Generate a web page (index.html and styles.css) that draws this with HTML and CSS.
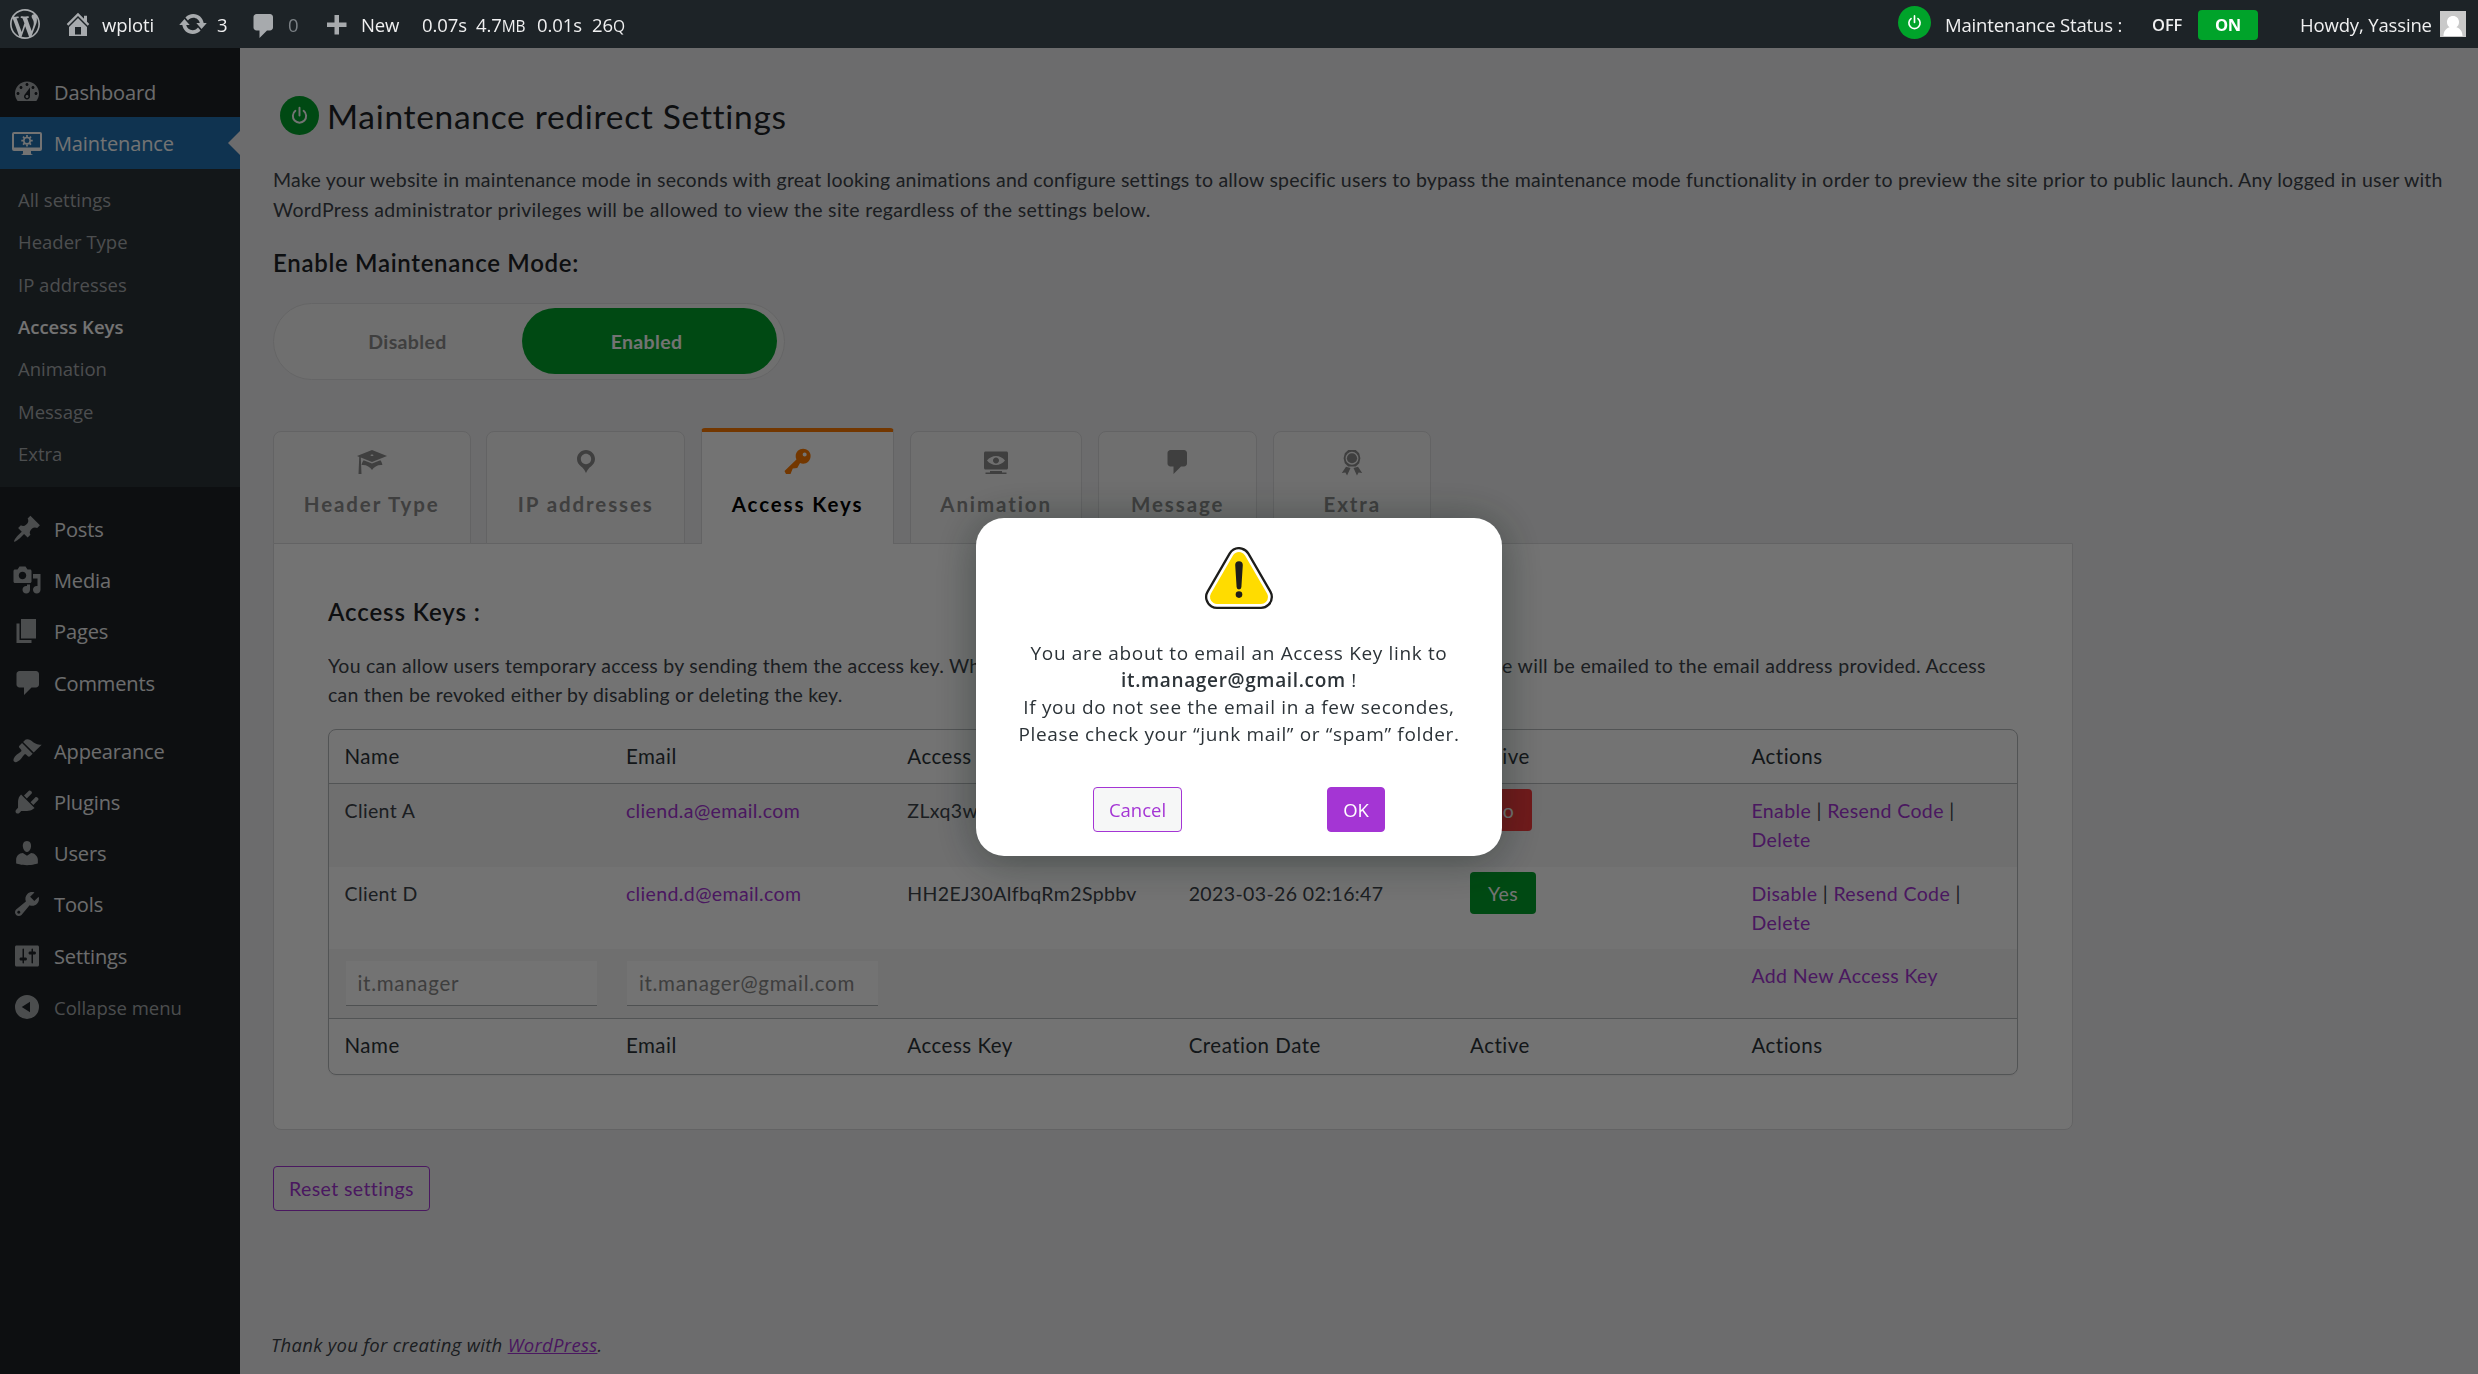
FILE: index.html
```html
<!DOCTYPE html>
<html lang="en">
<head>
<meta charset="utf-8">
<title>Maintenance redirect Settings</title>
<link rel="stylesheet" href="styles.css">
</head>
<body>
<header class="bar">
  <svg class="ic wp" viewBox="0 0 20 20"><path d="M20 10c0-5.51-4.49-10-10-10C4.48 0 0 4.49 0 10c0 5.52 4.48 10 10 10 5.51 0 10-4.48 10-10zM7.78 15.37L4.37 6.22c.55-.02 1.17-.08 1.17-.08.5-.06.44-1.13-.06-1.11 0 0-1.45.11-2.37.11-.18 0-.37 0-.58-.01C4.12 2.69 6.87 1.11 10 1.11c2.33 0 4.45.87 6.05 2.34-.68-.11-1.65.39-1.65 1.58 0 .74.45 1.36.9 2.1.35.61.55 1.36.55 2.46 0 1.49-1.4 5-1.4 5l-3.03-8.37c.54-.02.82-.17.82-.17.5-.05.44-1.25-.06-1.22 0 0-1.44.12-2.38.12-.87 0-2.33-.12-2.33-.12-.5-.03-.56 1.2-.06 1.22l.92.08 1.26 3.41zM17.41 10c.24-.64.74-1.87.43-4.25.7 1.29 1.05 2.71 1.05 4.25 0 3.29-1.73 6.24-4.4 7.78.97-2.59 1.94-5.2 2.92-7.78zM6.1 18.09C3.12 16.65 1.11 13.53 1.11 10c0-1.3.23-2.48.72-3.59C3.25 10.3 4.67 14.2 6.1 18.09zm4.03-6.63l2.58 6.98c-.86.29-1.76.45-2.71.45-.79 0-1.57-.11-2.29-.33.81-2.38 1.62-4.74 2.42-7.1z"/></svg>
  <svg class="ic home" viewBox="0 0 20 20"><path d="M16 8.5l1.53 1.53-1.06 1.06L10 4.6l-6.47 6.49-1.06-1.06L10 2.5l4 4v-2h2v4zm-6-2.46l6 5.99V18H4v-5.97zM12 17v-5H8v5h4z"/></svg>
  <span class="t site">wploti</span>
  <svg class="ic upd" viewBox="0 0 20 20"><path d="M10.2 3.28c3.53 0 6.43 2.61 6.92 6h2.08l-3.5 4-3.5-4h2.32c-.45-1.97-2.21-3.45-4.32-3.45-1.45 0-2.73.71-3.54 1.78L4.95 5.66C6.23 4.2 8.11 3.28 10.2 3.28zm-.4 13.44c-3.52 0-6.43-2.61-6.92-6H.8l3.5-4c1.17 1.33 2.33 2.67 3.5 4H5.48c.45 1.97 2.21 3.45 4.32 3.45 1.45 0 2.73-.71 3.54-1.78l1.71 1.95c-1.28 1.46-3.15 2.38-5.25 2.38z"/></svg>
  <span class="t three">3</span>
  <svg class="ic com" viewBox="0 0 20 20"><path d="M5 2h9c1.1 0 2 .9 2 2v7c0 1.1-.9 2-2 2h-2l-5 5v-5H5c-1.1 0-2-.9-2-2V4c0-1.1.9-2 2-2z"/></svg>
  <span class="t zero">0</span>
  <svg class="ic plus" viewBox="0 0 20 20"><path d="M17 7v3h-5v5H9v-5H4V7h5V2h3v5h5z"/></svg>
  <span class="t new">New</span>
  <span class="t q1">0.07s</span>
  <span class="t q2">4.7<small>MB</small></span>
  <span class="t q3">0.01s</span>
  <span class="t q4">26<small>Q</small></span>
  <div class="right">
    <svg class="pow" viewBox="0 0 40 40"><circle cx="20" cy="20" r="20"/><path d="M15.8 15.2a6.8 6.8 0 1 0 8.4 0M20 12v8"/></svg>
    <span class="t status">Maintenance Status :</span>
    <span class="t off">OFF</span>
    <span class="t on">ON</span>
    <span class="t howdy">Howdy, Yassine</span>
    <svg class="ava" viewBox="0 0 26 26"><rect width="26" height="26" fill="#c9c9c9"/><path d="M13 5c3.600 0 6 2.600 6 6 0 2.400-1 4.300-2.600 5.200 4 1.200 6 4.300 6.100 8.800h-19c.1-4.500 2.100-7.600 6.100-8.800C8 15.300 7 13.400 7 11c0-3.400 2.400-6 6-6z" fill="#fff"/></svg>
  </div>
</header>
<div class="shell">
  <nav class="side">
    <a class="row"><svg class="ic" viewBox="0 0 20 20"><path d="M3.76 16h12.48c1.1-1.37 1.76-3.11 1.76-5 0-4.42-3.58-8-8-8s-8 3.58-8 8c0 1.89.66 3.63 1.76 5zM10 4c.55 0 1 .45 1 1s-.45 1-1 1-1-.45-1-1 .45-1 1-1zM6 6c.55 0 1 .45 1 1s-.45 1-1 1-1-.45-1-1 .45-1 1-1zm8 0c.55 0 1 .45 1 1s-.45 1-1 1-1-.45-1-1 .45-1 1-1zm-5.37 5.55L12 7v6c0 1.1-.9 2-2 2s-2-.9-2-2c0-.57.24-1.08.63-1.45zM4 10c.55 0 1 .45 1 1s-.45 1-1 1-1-.45-1-1 .45-1 1-1zm12 0c.55 0 1 .45 1 1s-.45 1-1 1-1-.45-1-1 .45-1 1-1zm-5 3c0-.55-.45-1-1-1s-1 .45-1 1 .45 1 1 1 1-.45 1-1z"/></svg><span>Dashboard</span></a>
    <a class="row cur"><svg class="ic" viewBox="0 0 30 30"><path fill-rule="evenodd" d="M2 4h26a2 2 0 0 1 2 2v15a2 2 0 0 1-2 2h-9v2c0 1 1 1.500 2 2H9c1-.5 2-1 2-2v-2H2a2 2 0 0 1-2-2V6a2 2 0 0 1 2-2zm0 2v13.500h26V6z"/><g fill="none" stroke="currentColor"><circle cx="15" cy="12.700" r="3.200" stroke-width="1.600"/><path stroke-width="1.700" d="M15 9V7M15 16.400v2M11.300 12.700h-2M18.700 12.700h2M12.400 10.100L11 8.700M17.600 10.100L19 8.700M12.400 15.300L11 16.700M17.600 15.300l1.400 1.400"/></g></svg><span>Maintenance</span></a>
    <div class="sub">
      <a>All settings</a><a>Header Type</a><a>IP addresses</a><a class="sel">Access Keys</a><a>Animation</a><a>Message</a><a>Extra</a>
    </div>
    <a class="row sep"><svg class="ic" viewBox="0 0 20 20"><path d="M10.440 3.020l1.820-1.820 6.360 6.350-1.830 1.820c-1.050-.68-2.480-.57-3.410.36l-.75.75c-.92.93-1.040 2.350-.35 3.410l-1.830 1.820-2.410-2.410-2.800 2.790c-.42.42-3.380 2.710-3.800 2.290s1.860-3.390 2.280-3.810l2.790-2.790L4.100 9.360l1.830-1.820c1.050.69 2.480.57 3.400-.36l.75-.75c.93-.92 1.050-2.350.36-3.410z"/></svg><span>Posts</span></a>
    <a class="row"><svg class="ic" viewBox="0 0 20 20"><path d="M13 11V4c0-.55-.45-1-1-1h-1.670L9 1H5L3.670 3H2c-.55 0-1 .45-1 1v7c0 .55.45 1 1 1h10c.55 0 1-.45 1-1zM7 4.500c1.380 0 2.500 1.120 2.500 2.500S8.380 9.500 7 9.500 4.500 8.380 4.500 7 5.620 4.500 7 4.500zM14 6h5v10.500c0 1.380-1.120 2.500-2.500 2.500S14 17.880 14 16.500s1.120-2.500 2.500-2.500c.17 0 .34.02.5.05V9h-3V6zm-4 8.050V13h2v3.500c0 1.380-1.120 2.500-2.500 2.500S7 17.880 7 16.500 8.120 14 9.500 14c.17 0 .34.02.5.05z"/></svg><span>Media</span></a>
    <a class="row"><svg class="ic" viewBox="0 0 20 20"><path d="M6 15V2h10v13H6zm-1 1h8v2H3V5h2v11z"/></svg><span>Pages</span></a>
    <a class="row"><svg class="ic" viewBox="0 0 20 20"><path d="M5 2h11c1.100 0 2 .9 2 2v7c0 1.100-.9 2-2 2h-3l-5 5v-5H5c-1.100 0-2-.9-2-2V4c0-1.100.9-2 2-2z"/></svg><span>Comments</span></a>
    <a class="row sep"><svg class="ic" viewBox="0 0 20 20"><path d="M14.480 11.060L7.410 3.990l1.500-1.500c.5-.56 2.300-.47 3.510.32 1.210.8 1.430 1.280 2.910 2.100 1.180.64 2.450 1.260 4.450.85zm-.71.71L6.700 4.700 4.930 6.470c-.39.39-.39 1.020 0 1.410l1.060 1.060c.39.39.39 1.030 0 1.420-.6.6-1.430 1.110-2.210 1.690-.35.26-.7.53-1.010.84C1.430 14.230.4 16.080 1.400 17.070c.99 1 2.840-.03 4.180-1.360.31-.31.58-.66.85-1.020.57-.78 1.080-1.610 1.690-2.210.39-.39 1.020-.39 1.410 0l1.060 1.060c.39.39 1.020.39 1.410 0z"/></svg><span>Appearance</span></a>
    <a class="row"><svg class="ic" viewBox="0 0 20 20"><path d="M13.110 4.360L9.870 7.600 8 5.730l3.240-3.240c.35-.34 1.050-.2 1.560.32.52.51.66 1.210.31 1.550zm-8 1.770l.91-1.120 9.010 9.010-1.190.84c-.71.71-2.630 1.160-3.820 1.160H6.140L4.900 17.260c-.59.59-1.540.59-2.120 0-.59-.58-.59-1.530 0-2.120l1.240-1.240v-3.880c0-1.130.4-3.190 1.090-3.890zm7.260 3.970l3.240-3.240c.34-.35 1.040-.21 1.550.31.52.51.66 1.210.31 1.550l-3.240 3.250z"/></svg><span>Plugins</span></a>
    <a class="row"><svg class="ic" viewBox="0 0 20 20"><path d="M10 9.250c-2.270 0-2.730-3.440-2.730-3.440C7 4.020 7.820 2 9.970 2c2.160 0 2.980 2.020 2.710 3.810 0 0-.41 3.440-2.680 3.440zm0 2.570L12.720 10c2.390 0 4.520 2.330 4.520 4.530v2.490s-3.650 1.130-7.240 1.130c-3.650 0-7.240-1.130-7.240-1.130v-2.490c0-2.250 1.940-4.480 4.470-4.480z"/></svg><span>Users</span></a>
    <a class="row"><svg class="ic" viewBox="0 0 20 20"><path d="M16.680 9.770c-1.340 1.340-3.300 1.670-4.950.99l-5.410 6.520c-.99.99-2.590.99-3.580 0s-.99-2.590 0-3.570l6.520-5.420c-.68-1.650-.35-3.610.99-4.950 1.280-1.280 3.120-1.620 4.720-1.060l-2.890 2.890 2.820 2.820 2.860-2.870c.53 1.580.18 3.390-1.080 4.650zM3.810 16.210c.4.39 1.040.39 1.430 0 .4-.4.4-1.040 0-1.430-.39-.4-1.030-.4-1.430 0-.39.39-.39 1.030 0 1.430z"/></svg><span>Tools</span></a>
    <a class="row"><svg class="ic" viewBox="0 0 20 20"><path d="M18 16V4c0-.55-.45-1-1-1H3c-.55 0-1 .45-1 1v12c0 .55.45 1 1 1h14c.55 0 1-.45 1-1zM8 11h1c.55 0 1 .45 1 1s-.45 1-1 1H8v1.500c0 .28-.22.5-.5.5s-.5-.22-.5-.5V13H6c-.55 0-1-.45-1-1s.45-1 1-1h1V5.500c0-.28.22-.5.5-.5s.5.22.5.5V11zm5-2h-1c-.55 0-1-.45-1-1s.45-1 1-1h1V5.500c0-.28.22-.5.5-.5s.5.22.5.5V7h1c.55 0 1 .45 1 1s-.45 1-1 1h-1v5.500c0 .28-.22.5-.5.5s-.5-.22-.5-.5V9z"/></svg><span>Settings</span></a>
    <a class="row col"><svg class="ic" viewBox="0 0 20 20"><path fill-rule="evenodd" d="M10 2a8 8 0 1 1 0 16 8 8 0 0 1 0-16zm2 4.500L6.500 10 12 13.500z"/></svg><span>Collapse menu</span></a>
  </nav>
  <main class="main">
    <h1><svg class="pow" viewBox="0 0 40 40"><circle cx="20" cy="20" r="20"/><path d="M15.800 15.200a6.800 6.800 0 1 0 8.400 0M20 12v8"/></svg><span>Maintenance redirect Settings</span></h1>
    <p class="intro">Make your website in maintenance mode in seconds with great looking animations and configure settings to allow specific users to bypass the maintenance mode functionality in order to preview the site prior to public launch. Any logged in user with<br><span class="l2">WordPress administrator privileges will be allowed to view the site regardless of the settings below.</span></p>
    <h2 class="h-mode">Enable Maintenance Mode:</h2>
    <div class="toggle"><span class="dis">Disabled</span><span class="en">Enabled</span></div>
    <div class="tabs">
      <div class="tab t1"><svg class="ic" viewBox="0 0 20 20"><path d="M10 10L2.540 7.020 3 18H1l.48-11.410L0 6l10-4 10 4zm0-5c-.55 0-1 .22-1 .5s.45.5 1 .5 1-.22 1-.5-.45-.5-1-.5zm0 6l5.570-2.230c.71.94 1.200 2.070 1.360 3.300-.3-.04-.61-.07-.93-.07-2.550 0-4.780 1.370-6 3.410C8.780 13.370 6.550 12 4 12c-.32 0-.63.03-.93.07.16-1.230.65-2.360 1.360-3.300z"/></svg><span>Header Type</span></div>
      <div class="tab t2"><svg class="ic" viewBox="0 0 20 20"><path d="M10 2C6.690 2 4 4.690 4 8c0 2.020 1.170 3.710 2.530 4.890.43.37 1.180.96 1.850 1.830.74.97 1.410 2.010 1.620 2.710.21-.7.88-1.740 1.620-2.710.67-.87 1.420-1.460 1.850-1.830C14.830 11.710 16 10.020 16 8c0-3.310-2.690-6-6-6zm0 2.560c1.900 0 3.440 1.540 3.440 3.440S11.900 11.440 10 11.440 6.560 9.900 6.560 8 8.100 4.560 10 4.560z"/></svg><span>IP addresses</span></div>
      <div class="tab t3 act"><svg class="ic" viewBox="0 0 20 20"><path d="M16.950 2.580c1.960 1.950 1.960 5.120 0 7.070-1.510 1.510-3.750 1.840-5.590 1.010l-1.870 3.310-2.990.31L5 18H2l-1-2 7.950-7.690c-.92-1.870-.62-4.180.93-5.730 1.950-1.960 5.120-1.960 7.070 0zm-2.510 3.790c.74 0 1.330-.6 1.330-1.340 0-.73-.59-1.330-1.330-1.330-.73 0-1.330.6-1.330 1.330 0 .74.6 1.340 1.330 1.340z"/></svg><span>Access Keys</span></div>
      <div class="tab t4"><svg class="ic" viewBox="0 0 20 20"><path d="M18 14V4c0-.55-.45-1-1-1H3c-.55 0-1 .45-1 1v10c0 .55.45 1 1 1h14c.55 0 1-.45 1-1zm-8-8c2.300 0 4.400 1.140 6 3-1.600 1.860-3.700 3-6 3s-4.400-1.140-6-3c1.600-1.860 3.700-3 6-3zm2 3c0-1.100-.9-2-2-2s-2 .9-2 2 .9 2 2 2 2-.9 2-2zm2 8h3v1H3v-1h3v-1h8v1z"/></svg><span>Animation</span></div>
      <div class="tab t5"><svg class="ic" viewBox="0 0 20 20"><path d="M5 2h9c1.100 0 2 .9 2 2v7c0 1.100-.9 2-2 2h-2l-5 5v-5H5c-1.100 0-2-.9-2-2V4c0-1.100.9-2 2-2z"/></svg><span>Message</span></div>
      <div class="tab t6"><svg class="ic" viewBox="0 0 20 20"><path fill-rule="evenodd" d="M7.500 2h5l2.300 2.200.8 3.300-.8 3.300-2.300 2.200h-5l-2.300-2.200-.8-3.300.8-3.300zM10 3.200a4.300 4.300 0 1 0 0 8.600 4.300 4.300 0 0 0 0-8.600z"/><circle cx="10" cy="7.500" r="3.400"/><path d="M6 13.200l3 .8-2.300 5-1.100-2L3.200 17.400zM14 13.200l-3 .8 2.300 5 1.100-2 2.400.4z"/></svg><span>Extra</span></div>
    </div>
    <section class="panel">
      <h2>Access Keys :</h2>
      <p class="desc"><span class="d1">You can allow users temporary access by sending them the access key. When a new key is created, a link containing the access cod</span><span class="d2">e will be emailed to the email address provided. Access</span><br>can then be revoked either by disabling or deleting the key.</p>
      <div class="table">
        <div class="tr head"><span>Name</span><span>Email</span><span>Access Key</span><span>Creation Date</span><span>Active</span><span>Actions</span></div>
        <div class="tr odd r1"><span>Client A</span><a>cliend.a@email.com</a><span>ZLxq3wPb7TnKd5RmYc2v</span><span>2023-03-26 02:15:21</span><span class="bt"><b class="no">No</b></span><span><a>Enable</a> | <a>Resend Code</a> |<br><a>Delete</a></span></div>
        <div class="tr r2"><span>Client D</span><a>cliend.d@email.com</a><span>HH2EJ30AlfbqRm2Spbbv</span><span>2023-03-26 02:16:47</span><span class="bt"><b class="yes">Yes</b></span><span><a>Disable</a> | <a>Resend Code</a> |<br><a>Delete</a></span></div>
        <div class="tr odd r3"><span class="in">it.manager</span><span class="in">it.manager@gmail.com</span><i></i><i></i><i></i><span><a>Add New Access Key</a></span></div>
        <div class="tr foot"><span>Name</span><span>Email</span><span>Access Key</span><span>Creation Date</span><span>Active</span><span>Actions</span></div>
      </div>
    </section>
    <span class="reset">Reset settings</span>
    <p class="thanks">Thank you for creating with <a>WordPress</a>.</p>
  </main>
</div>
<div class="overlay">
  <div class="modal">
    <svg class="warn" viewBox="0 0 68 62"><g stroke-linejoin="round"><path d="M12 50h44L34 12z" fill="#1d1d1b" stroke="#1d1d1b" stroke-width="24"/><path d="M12 50h44L34 12z" fill="#fff" stroke="#fff" stroke-width="19.400"/><path d="M12 50h44L34 12z" fill="#ffdc00" stroke="#ffdc00" stroke-width="14"/></g><path d="M30.200 18a3.800 3.800 0 0 1 7.600 0l-1.400 22a2.400 2.400 0 0 1-4.800 0z" fill="#1d1d1b"/><circle cx="34" cy="47.600" r="3.300" fill="#1d1d1b"/></svg>
    <p>You are about to email an Access Key link to<br><b>it.manager@gmail.com</b> !<br>If you do not see the email in a few secondes,<br>Please check your “junk mail” or “spam” folder.</p>
    <div class="btns"><span class="cancel">Cancel</span><span class="ok">OK</span></div>
  </div>
</div>
</body>
</html>
```
FILE: styles.css
```css
* { box-sizing: border-box; }
body { margin: 0; width: 2478px; height: 1374px; overflow: hidden; background: #f0f0f1; font-family: Lato, sans-serif; font-size: 19.5px; color: #3c434a; }
h1, h2, p { margin: 0; font-weight: 400; }
a { color: #a435d4; white-space: nowrap; }
.ic { width: 30px; height: 30px; fill: currentColor; flex: none; display: block; }
.pow { display: block; flex: none; }
.pow circle { fill: #00a32a; }
.pow path { fill: none; stroke: #fff; stroke-width: 2; stroke-linecap: round; }

/* admin bar */
.bar { position: relative; z-index: 20; height: 48px; background: #1d2327; color: #f0f0f1; display: flex; align-items: flex-start; font-family: "Open Sans", sans-serif; font-size: 18.5px; line-height: 50px; letter-spacing: -.1px; white-space: nowrap; }
.bar .ic { color: #a7aaad; margin-top: 9px; }
.bar .wp { margin-left: 10px; }
.bar .home { margin-left: 23px; }
.bar .site { margin-left: 9px; width: 54px; }
.bar .upd { margin-left: 22px; }
.bar .three { margin-left: 9px; width: 12px; }
.bar .com { margin: 11px 0 0 20px; }
.bar .zero { margin-left: 9px; width: 12px; color: #7b8085; }
.bar .plus { margin: 12px 0 0 21px; }
.bar .new { margin-left: 10px; width: 40px; }
.bar .q1 { margin-left: 21px; width: 54px; }
.bar .q2 { width: 61px; }
.bar .q3 { width: 55px; }
.bar small { font-size: 15.5px; }
.bar .right { margin-left: auto; display: flex; align-items: flex-start; padding-right: 12px; }
.bar .pow { width: 33px; height: 33px; margin-top: 6px; }
.bar .status { margin-left: 14px; width: 207px; letter-spacing: -.16px; }
.bar .off { width: 46px; font-size: 16.5px; font-weight: 600; }
.bar .on { width: 60px; height: 30px; margin-top: 10px; line-height: 30px; text-align: center; background: #00a32a; border-radius: 4px; font-size: 16.5px; font-weight: 700; letter-spacing: -.3px; color: #fff; }
.bar .howdy { margin-left: 42px; width: 140px; letter-spacing: -.15px; }
.bar .ava { width: 26px; height: 26px; margin-top: 11px; }

/* side menu */
.shell { display: flex; height: 1326px; }
.side { width: 240px; flex: none; background: #1d2327; padding-top: 18px; font-family: "Open Sans", sans-serif; color: #f0f0f1; }
.row { display: flex; align-items: center; height: 51.3px; padding-left: 12px; gap: 12px; color: #f0f0f1; font-size: 20px; letter-spacing: -.12px; }
.row span { padding-top: 1px; }
.row .ic { color: #a7aaad; }
.row.sep { margin-top: 16.5px; }
.row.cur { background: #2271b1; color: #fff; position: relative; }
.row.cur .ic { color: #fff; }
.row.cur::after { content: ""; position: absolute; right: 0; top: 14px; border: 12px solid transparent; border-left: 0; border-right-color: #f0f0f1; }
.row.col { color: #a7aaad; font-size: 18.5px; letter-spacing: 0; }
.sub { background: #2c3338; padding: 9.5px 0 12.5px 18px; display: flex; flex-direction: column; font-size: 18.5px; }
.sub a { height: 42.3px; line-height: 43px; color: #a9adb0; }
.sub .sel { color: #fff; font-weight: 600; }

/* settings page */
.main { flex: 1; padding: 47px 0 0 33px; display: flex; flex-direction: column; align-items: flex-start; }
h1 { display: flex; align-items: center; height: 40px; padding-left: 7px; font-size: 33.5px; letter-spacing: .7px; color: #1d2327; white-space: nowrap; }
h1 .pow { width: 39px; height: 39px; margin-right: 8px; }
h1 span { padding-top: 1px; }
.intro { margin-top: 29.5px; line-height: 30px; letter-spacing: .22px; white-space: nowrap; }
.intro .l2 { letter-spacing: .33px; }
h2 { font-size: 24px; line-height: 34px; font-weight: 600; letter-spacing: .7px; color: #1d2327; white-space: nowrap; }
.h-mode { margin-top: 21px; }
.toggle { margin-top: 23px; width: 512px; height: 77px; border: 1px solid #e0e0e2; border-radius: 39px; background: #f6f6f6; padding: 4px 7px 5px; display: flex; font-weight: 700; letter-spacing: .35px; line-height: 67px; text-align: center; }
.toggle .dis { width: 241px; padding-left: 12px; color: #8c8c8c; }
.toggle .en { width: 255px; background: #00a32a; border-radius: 33px; color: #fff; padding-right: 6px; }
.tabs { margin-top: 48px; height: 116px; display: flex; gap: 15.8px; align-items: flex-end; position: relative; z-index: 1; margin-bottom: -1px; }
.tab { height: 113px; border: 1px solid #dcdcde; border-radius: 8px 8px 0 0; background: #f6f6f6; display: flex; flex-direction: column; align-items: center; padding-top: 15px; color: #8c8c8c; font-size: 20.5px; font-weight: 700; letter-spacing: 1.9px; line-height: 30px; white-space: nowrap; gap: 12px; }
.t1 { width: 197.5px; }
.t2 { width: 199px; }
.t3 { width: 193px; }
.t4 { width: 172.5px; }
.t5 { width: 159px; }
.t6 { width: 158.5px; }
.tab.act { height: 116px; border-top: 4px solid #ff7b00; border-bottom: 0; border-radius: 4px 4px 0 0; background: #fff; color: #000; }
.act .ic { color: #ff7b00; }

.panel { width: 1800px; height: 587px; border: 1px solid #dcdcde; border-radius: 0 0 8px 8px; background: #fff; padding: 51px 54px 0; }
.panel h2 { letter-spacing: .9px; }
.desc { margin-top: 22px; line-height: 29px; letter-spacing: .22px; white-space: nowrap; }
.d1 { display: inline-block; width: 1174px; overflow: hidden; vertical-align: top; letter-spacing: .27px; }
.d2 { letter-spacing: .32px; }
.table { margin-top: 20.5px; width: 1690px; border: 1px solid #b7babd; border-radius: 8px; box-shadow: 0 1px 2px rgba(0,0,0,.05); overflow: hidden; }
.tr { display: grid; grid-template-columns: repeat(5, 281.4px) 1fr; padding: 12px 0 0 15.5px; line-height: 29px; letter-spacing: .38px; white-space: nowrap; }
.head, .foot { font-size: 20.5px; letter-spacing: .5px; color: #2c3338; }
.head { height: 54px; border-bottom: 1px solid #b7babd; }
.foot { height: 56px; border-top: 1px solid #b7babd; }
.odd { background: #f6f6f7; }
.r1 { height: 83px; }
.r2 { height: 82px; }
.r3 { height: 69px; }
.bt { margin-top: -7px; }
.bt b { display: block; width: 66px; height: 42px; border-radius: 4px; background: #00a32a; color: #fff; line-height: 42px; text-align: center; font-weight: 400; padding-top: 1px; }
.bt .no { width: 62px; background: #f93a3c; }
.in { width: 251px; height: 45px; margin: 0 0 0 1px; background: #fff; border-bottom: 1px solid #b0b3b6; padding-left: 12px; font-size: 20.5px; line-height: 45px; letter-spacing: .7px; color: #8a8a8a; }
.reset { margin-top: 36px; width: 157px; height: 45px; border: 1px solid #a435d4; border-radius: 4px; background: #f6f7f7; color: #a435d4; text-align: center; line-height: 43px; letter-spacing: .4px; }
.thanks { margin-top: 119px; font-family: "Open Sans", sans-serif; font-style: italic; font-size: 18.5px; line-height: 30px; letter-spacing: .3px; margin-left: -2px; white-space: nowrap; }
.thanks a { text-decoration: underline; }

/* confirmation dialog */
.overlay { position: fixed; inset: 0; z-index: 10; background: rgba(0,0,0,.55); display: flex; align-items: center; justify-content: center; }
.modal { width: 526px; height: 338px; background: #fff; border-radius: 28px; box-shadow: 0 4px 44px rgba(10,24,20,.4); display: flex; flex-direction: column; align-items: center; font-family: "Open Sans", sans-serif; color: #2c3338; padding-top: 29px; }
.warn { width: 68px; height: 62px; display: block; flex: none; }
.modal p { margin-top: 30.5px; font-size: 19px; line-height: 27.3px; letter-spacing: .65px; text-align: center; white-space: nowrap; }
.modal b { font-weight: 600; }
.btns { margin-top: 38.5px; width: 292px; display: flex; justify-content: space-between; }
.btns span { height: 45px; line-height: 43px; border: 1px solid #a435d4; border-radius: 4px; text-align: center; font-size: 18.5px; }
.cancel { width: 89px; color: #a435d4; background: #f6f7f7; }
.ok { width: 58px; background: #a435d4; color: #fff; font-weight: 500; }
```
